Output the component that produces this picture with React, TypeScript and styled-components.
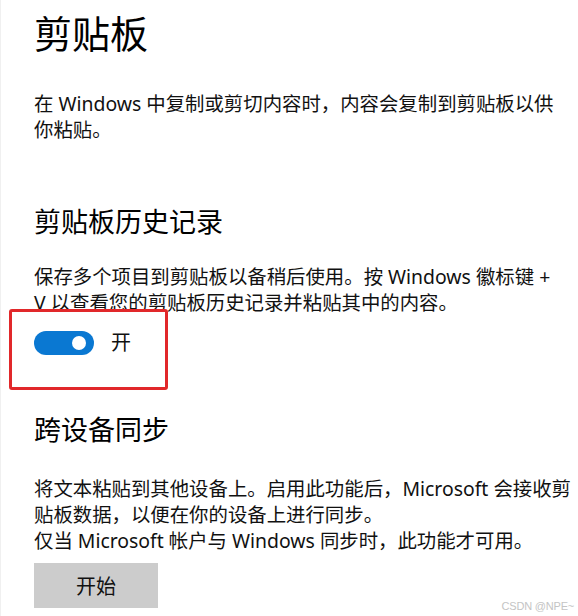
import React from 'react';
import styled, { createGlobalStyle } from 'styled-components';

const GlobalStyle = createGlobalStyle`
  html, body {
    margin: 0;
    padding: 0;
    background: #ffffff;
  }
  body {
    font-family: "Segoe UI", "Noto Sans", "Noto Sans CJK SC", sans-serif;
    color: #111111;
  }
`;

const Page = styled.div`
  position: relative;
  width: 578px;
  height: 616px;
  box-sizing: border-box;
  padding: 8px 0 0 33px;
  border-left: 1px solid #f0f0f0;
  overflow: hidden;
  background: #ffffff;
`;

const Title = styled.h1`
  margin: 0;
  font-size: 38px;
  line-height: 50px;
  font-weight: 400;
  color: #000000;
`;

const SubTitle = styled.h2<{ $top: number }>`
  margin: ${(p) => p.$top}px 0 0;
  font-size: 27px;
  line-height: 36px;
  font-weight: 400;
  color: #000000;
`;

const Text = styled.p<{ $top: number }>`
  margin: ${(p) => p.$top}px 0 0;
  font-size: 19.4px;
  line-height: 26px;
  color: #111111;
  white-space: nowrap;
`;

const ToggleRow = styled.div`
  position: relative;
  display: flex;
  align-items: center;
  gap: 17px;
  margin-top: 15px;
  height: 24px;
  width: max-content;
`;

const Highlight = styled.div`
  position: absolute;
  left: -25px;
  top: -22px;
  width: 159px;
  height: 81px;
  box-sizing: border-box;
  border: 3.5px solid #e1282a;
  border-radius: 3px;
  pointer-events: none;
`;

const Track = styled.div<{ $on: boolean }>`
  position: relative;
  width: 60px;
  height: 24px;
  border-radius: 12px;
  background: ${(p) => (p.$on ? '#0a78d2' : '#ffffff')};
  display: flex;
  align-items: center;
  justify-content: ${(p) => (p.$on ? 'flex-end' : 'flex-start')};
  padding: 0 8px;
  box-sizing: border-box;
`;

const Thumb = styled.span`
  width: 14px;
  height: 14px;
  border-radius: 50%;
  background: #ffffff;
`;

const ToggleLabel = styled.span`
  font-size: 20px;
  line-height: 24px;
  color: #111111;
`;

const Button = styled.button`
  display: block;
  margin-top: 9px;
  width: 124px;
  height: 45px;
  border: none;
  border-radius: 0;
  background: #cccccc;
  font-family: inherit;
  font-size: 20px;
  color: #111111;
  padding: 0;
`;

const Watermark = styled.span`
  position: absolute;
  right: 4px;
  bottom: 4px;
  font-family: "Liberation Sans", Arial, sans-serif;
  font-size: 11px;
  color: #c4c4c4;
  letter-spacing: -0.2px;
`;

export default function App() {
  return (
    <>
      <GlobalStyle />
      <Page>
        <Title>剪贴板</Title>
        <Text $top={33}>
          在 Windows 中复制或剪切内容时，内容会复制到剪贴板以供
          <br />
          你粘贴。
        </Text>

        <SubTitle $top={61}>剪贴板历史记录</SubTitle>
        <Text $top={24}>
          保存多个项目到剪贴板以备稍后使用。按 Windows 徽标键 +
          <br />
          V 以查看您的剪贴板历史记录并粘贴其中的内容。
        </Text>
        <ToggleRow>
          <Highlight />
          <Track $on>
            <Thumb />
          </Track>
          <ToggleLabel>开</ToggleLabel>
        </ToggleRow>

        <SubTitle $top={57}>跨设备同步</SubTitle>
        <Text $top={28}>
          将文本粘贴到其他设备上。启用此功能后，Microsoft 会接收剪
          <br />
          贴板数据，以便在你的设备上进行同步。
          <br />
          仅当 Microsoft 帐户与 Windows 同步时，此功能才可用。
        </Text>
        <Button>开始</Button>

        <Watermark>CSDN @NPE~</Watermark>
      </Page>
    </>
  );
}
